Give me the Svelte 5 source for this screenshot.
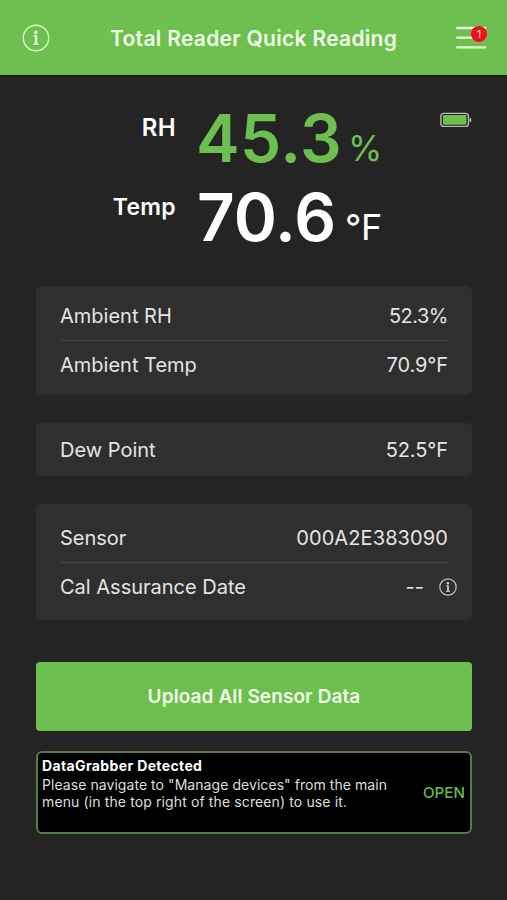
<script>
  const groups = [
    { cls: 'ambient', rows: [
      { label: 'Ambient RH', value: '52.3%', v: 'percent' },
      { label: 'Ambient Temp', value: '70.9°F', v: 'degrees' }
    ] },
    { cls: 'dew', rows: [{ label: 'Dew Point', value: '52.5°F', v: 'degrees' }] },
    { cls: 'sensor', rows: [
      { label: 'Sensor', value: '000A2E383090', v: 'serial' },
      { label: 'Cal Assurance Date', value: '--', info: true, v: 'date' }
    ] }
  ];
</script>

<div class="screen">
  <header>
    <svg class="info" width="28" height="28" viewBox="0 0 28 28">
      <circle cx="14" cy="14" r="12.7" fill="none" stroke="#dcfac9" stroke-width="1.4" />
      <circle cx="13.8" cy="8.4" r="1.8" fill="#e3ffd2" />
      <path d="M11.5 12h3v8.1M11.3 20.3h5.4" fill="none" stroke="#e3ffd2" stroke-width="1.3" />
      <path d="M14 11.4v9" stroke="#e3ffd2" stroke-width="2.4" />
    </svg>
    <h1>Total Reader Quick Reading</h1>
    <div class="menu">
      <svg width="31" height="24" viewBox="0 0 31 24">
        <path d="M1.2 2H29.2M1.2 11.7H29.2M1.2 21.3H29.2" stroke="#e6ffd8" stroke-width="2.3" stroke-linecap="round" />
      </svg>
      <span class="badge">1</span>
    </div>
  </header>

  <section class="readings">
    <div class="reading rh">
      <span class="name">RH</span>
      <span class="number">45.3</span>
      <span class="unit">%</span>
    </div>
    <div class="reading temp">
      <span class="name">Temp</span>
      <span class="number">70.6</span>
      <span class="unit">°F</span>
    </div>
    <svg class="battery" width="33" height="16" viewBox="0 0 33 16">
      <rect x="1.9" y="1.4" width="27.6" height="13" rx="3" fill="#202020" stroke="#b9b9b9" stroke-width="1.4" />
      <rect x="3.9" y="3.1" width="23.6" height="9.6" rx="1" fill="#6dbf4b" />
      <path d="M30.8 5.8q1.5.3 1.5 2.2t-1.5 2.2z" fill="#d2d2d2" />
    </svg>
  </section>

  {#each groups as group}
    <section class="card {group.cls}">
      {#each group.rows as row}
        <div class="row">
          <span>{row.label}</span>
          <span class={row.v}>{row.value}</span>
          {#if row.info}
            <svg class="cal-info" width="20" height="20" viewBox="0 0 20 20">
              <circle cx="10" cy="10" r="8.2" fill="none" stroke="#c4c4c4" stroke-width="1.2" />
              <circle cx="9.9" cy="6.2" r="1.2" fill="#d0d0d0" />
              <path d="M8.3 8.8h1.8M8 14.3h4" fill="none" stroke="#d0d0d0" stroke-width="1" />
              <path d="M10 8.4v6" stroke="#d0d0d0" stroke-width="1.7" />
            </svg>
          {/if}
        </div>
      {/each}
    </section>
  {/each}

  <button class="upload">Upload All Sensor Data</button>

  <aside>
    <div class="message">
      <strong>DataGrabber Detected</strong>
      <p><span class="l1">Please navigate to "Manage devices" from the main</span><br /><span class="l2">menu (in the top right of the screen) to use it.</span></p>
    </div>
    <button class="open">OPEN</button>
  </aside>
</div>

<style>
  :global(body) { margin: 0; background: #242424; }
  .screen {
    width: 507px; height: 900px; box-sizing: border-box; overflow: hidden;
    display: flex; flex-direction: column;
    background: #242424; color: #e4e4e4;
    font-family: Inter, "Liberation Sans", sans-serif;
  }
  header {
    height: 75px; flex: none; box-sizing: border-box; padding: 0 20px 0 22px;
    display: flex; align-items: center; justify-content: space-between;
    background: #6dbf4f; box-shadow: 0 1px 2px #151a12;
  }
  h1 {
    margin: 2px 0 0 2px; width: 288px; font-size: 21px; line-height: 28px; font-weight: 600;
    white-space: nowrap; color: #f0ffe6; letter-spacing: 0.3px;
  }
  .info { margin-top: 1px; }
  .menu { position: relative; width: 31px; height: 24px; }
  .menu svg { display: block; }
  .badge {
    position: absolute; left: 15px; top: 0; width: 16px; height: 16px; border-radius: 50%;
    background: #f20d18; color: #ffd9d5; font-size: 11px; line-height: 16px; font-weight: 500; text-align: center;
  }
  .readings { position: relative; height: 211px; flex: none; box-sizing: border-box; padding-top: 24px; }
  .reading { display: flex; height: 79px; white-space: nowrap; }
  .name {
    width: 176px; margin-right: 21px; text-align: right; margin-top: 15px;
    font-size: 23px; line-height: 28px; font-weight: 600; color: #fff; letter-spacing: 0.3px;
  }
  .number { width: 145px; font-size: 65.5px; line-height: 80px; font-weight: 600; }
  .rh .name { font-size: 24px; }
  .unit { font-size: 36px; line-height: 80px; padding-top: 9px; font-weight: 400; }
  .rh .number, .rh .unit { color: #6dbf4f; }
  .rh .number { letter-spacing: 0.5px; margin-left: -1px; }
  .rh .unit { margin-left: 7px; font-size: 35px; }
  .temp .number, .temp .unit { color: #fff; }
  .temp .unit { margin-left: 3px; letter-spacing: -0.4px; }
  .battery { position: absolute; left: 439px; top: 37px; }
  .card {
    margin: 0 35px 0 36px; flex: none; box-sizing: border-box; padding: 6px 24px 0;
    border-radius: 5px; background: #2f2f2f;
  }
  .ambient { height: 109px; }
  .dew { height: 53px; margin-top: 28px; padding-top: 3px; }
  .sensor { height: 116px; margin-top: 28px; padding-top: 10px; }
  .row {
    position: relative; display: flex; justify-content: space-between; align-items: center; height: 48px;
    font-size: 20px; line-height: 48px; white-space: nowrap;
  }
  .row + .row { border-top: 1px solid #454545; }
  .percent { letter-spacing: -0.5px; }
  .degrees { letter-spacing: -0.1px; }
  .serial { letter-spacing: 0.1px; }
  .date { margin-left: auto; margin-right: 24px; }
  .cal-info { position: absolute; right: -10px; top: 14px; }
  button { font-family: inherit; border: 0; padding: 0; margin: 0; }
  .upload {
    margin: 42px 35px 0 36px; height: 69px; flex: none; border-radius: 4px; box-sizing: border-box; padding-top: 1px;
    background: #6dbf4f; color: #f0ffe6; font-size: 19px; font-weight: 600; line-height: 68px; letter-spacing: 0.1px;
  }
  aside {
    margin: 20px 35px 0 36px; height: 83px; flex: none; box-sizing: border-box;
    display: flex; justify-content: space-between; padding: 4px 5px 0 4px;
    border: 2px solid #557b46; border-radius: 6px; background: #000; white-space: nowrap;
  }
  strong { display: block; font-size: 14px; line-height: 18px; font-weight: 700; color: #fff; letter-spacing: 0.37px; }
  p { margin: 2px 0 0; font-size: 14px; line-height: 16.5px; color: #dedede; }
  .l1 { letter-spacing: 0.06px; }
  .l2 { letter-spacing: 0.12px; }
  .open { align-self: flex-start; margin-top: 27px; background: none; color: #62bd49; font-size: 15.2px; line-height: 18px; font-weight: 500; }
</style>
